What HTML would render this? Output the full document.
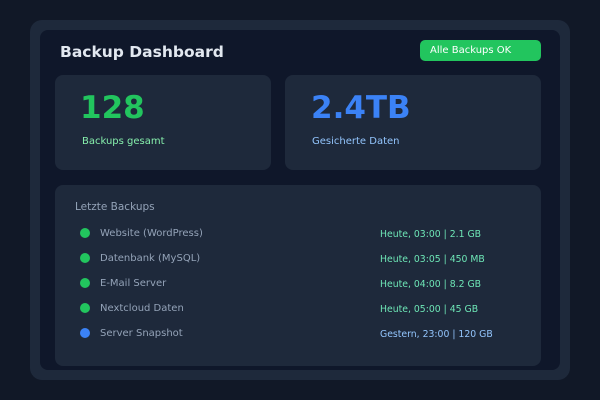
<!DOCTYPE html><html><head><style>
body{margin:0;width:600px;height:400px;background:#111827;font-family:"DejaVu Sans","Liberation Sans",sans-serif;position:relative;overflow:hidden}
div{position:absolute;box-sizing:border-box}
.t{white-space:nowrap}
</style></head><body>
<div style="left:30px;top:20px;width:540px;height:360px;background:#1e293b;border-radius:12px"></div>
<div style="left:40px;top:30px;width:520px;height:340px;background:#0f172a;border-radius:8px"></div>
<div class="t" style="left:60px;top:43px;font-size:15.5px;font-weight:bold;color:#e2e8f0">Backup Dashboard</div>
<div style="left:420px;top:40px;width:121px;height:21px;background:#22c55e;border-radius:5px"></div>
<div class="t" style="left:430px;top:45px;font-size:10px;color:#fff">Alle Backups OK</div>
<div style="left:55px;top:75px;width:216px;height:95px;background:#1e293b;border-radius:8px"></div>
<div style="left:285px;top:75px;width:256px;height:95px;background:#1e293b;border-radius:8px"></div>
<div class="t" style="left:80px;top:90px;font-size:31px;font-weight:bold;color:#22c55e">128</div>
<div class="t" style="left:82px;top:136px;font-size:10px;color:#86efac">Backups gesamt</div>
<div class="t" style="left:311px;top:90px;font-size:31px;font-weight:bold;color:#3b82f6">2.4TB</div>
<div class="t" style="left:312px;top:136px;font-size:10px;color:#93c5fd">Gesicherte Daten</div>
<div style="left:55px;top:185px;width:486px;height:181px;background:#1e293b;border-radius:8px"></div>
<div class="t" style="left:75px;top:201px;font-size:10.5px;color:#94a3b8">Letzte Backups</div>
<div style="left:80px;top:228px;width:10px;height:10px;border-radius:50%;background:#22c55e"></div>
<div class="t" style="left:100px;top:228px;font-size:10px;color:#94a3b8">Website (WordPress)</div>
<div class="t" style="left:380px;top:229px;font-size:9.3px;color:#6ee7b7">Heute, 03:00 | 2.1 GB</div>
<div style="left:80px;top:253px;width:10px;height:10px;border-radius:50%;background:#22c55e"></div>
<div class="t" style="left:100px;top:253px;font-size:10px;color:#94a3b8">Datenbank (MySQL)</div>
<div class="t" style="left:380px;top:254px;font-size:9.3px;color:#6ee7b7">Heute, 03:05 | 450 MB</div>
<div style="left:80px;top:278px;width:10px;height:10px;border-radius:50%;background:#22c55e"></div>
<div class="t" style="left:100px;top:278px;font-size:10px;color:#94a3b8">E-Mail Server</div>
<div class="t" style="left:380px;top:279px;font-size:9.3px;color:#6ee7b7">Heute, 04:00 | 8.2 GB</div>
<div style="left:80px;top:303px;width:10px;height:10px;border-radius:50%;background:#22c55e"></div>
<div class="t" style="left:100px;top:303px;font-size:10px;color:#94a3b8">Nextcloud Daten</div>
<div class="t" style="left:380px;top:304px;font-size:9.3px;color:#6ee7b7">Heute, 05:00 | 45 GB</div>
<div style="left:80px;top:328px;width:10px;height:10px;border-radius:50%;background:#3b82f6"></div>
<div class="t" style="left:100px;top:328px;font-size:10px;color:#94a3b8">Server Snapshot</div>
<div class="t" style="left:380px;top:329px;font-size:9.3px;color:#93c5fd">Gestern, 23:00 | 120 GB</div>
</body></html>
